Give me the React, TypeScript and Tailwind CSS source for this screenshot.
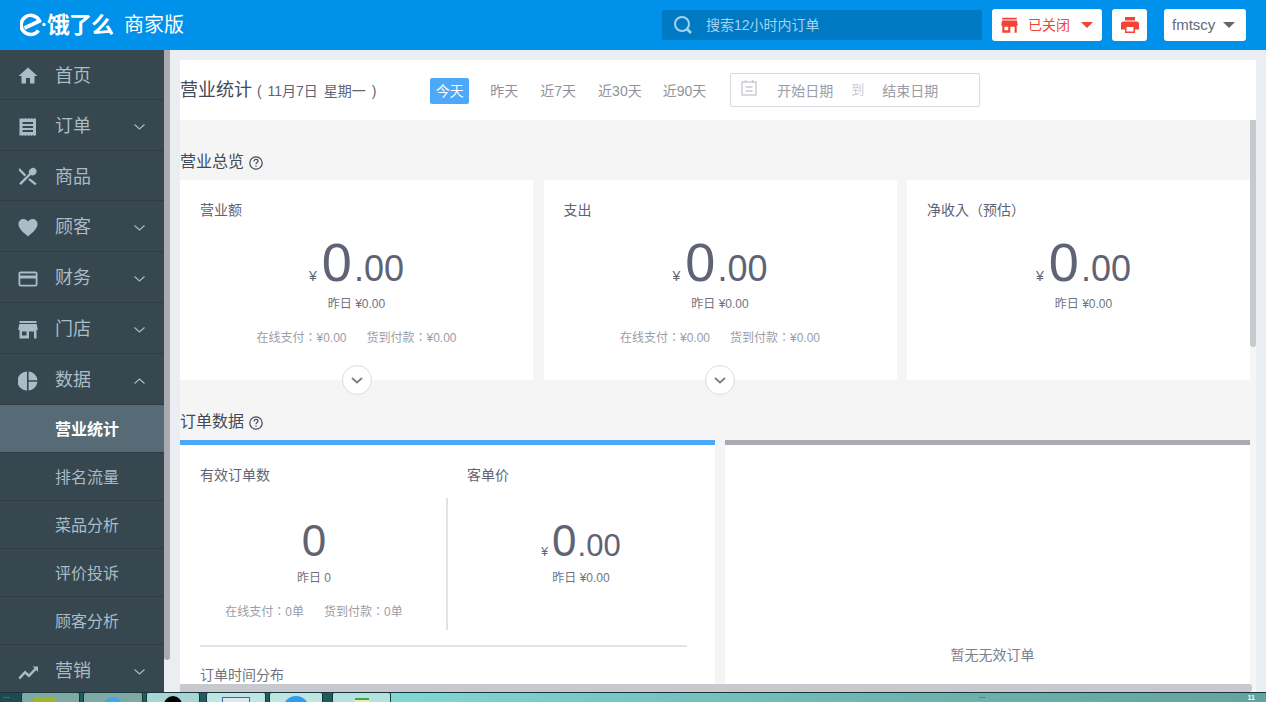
const cjk = "font-['Liberation_Sans','Noto_Sans_CJK_SC',sans-serif]"
const centered = "font-['Liberation_Sans','Noto_Sans_CJK_TC',sans-serif]"

function Chevron({ up }: { up?: boolean }) {
  return (
    <svg width="11" height="6" viewBox="0 0 11 6" className="ml-auto mr-[19px]" fill="none" stroke="#a9bcc7" strokeWidth="1.1">
      <path d={up ? 'M0.5 5.5 L5.5 1 L10.5 5.5' : 'M0.5 0.5 L5.5 5 L10.5 0.5'} />
    </svg>
  )
}

const icons: Record<string, React.ReactNode> = {
  home: <path d="M10 1.5 L0.5 10 H3.5 V17.5 H8 V12 H12 V17.5 H16.5 V10 H19.5 Z" />,
  order: <path fillRule="evenodd" d="M1.5 1 L3 2 L4.5 1 L6 2 L7.5 1 L9 2 L10.5 1 L12 2 L13.5 1 L15 2 L16.5 1 L18 2 V18 L16.5 19 L15 18 L13.5 19 L12 18 L10.5 19 L9 18 L7.5 19 L6 18 L4.5 19 L3 18 L1.5 19 Z M4.5 5 V7 H15 V5 Z M4.5 9 V11 H15 V9 Z M4.5 13 V15 H15 V13 Z" />,
  food: <path d="M1.5 1 L8.2 7.8 L6.6 9.4 L0.8 3.5 Z M16.8 1.2 C19 2.6 19.2 5.2 17.6 7 C16.2 8.4 14.2 8.8 12.8 8 L3 18 L1.2 16.3 L11 6.6 C10.4 5 11 3 12.4 2 C13.8 .9 15.4 .5 16.8 1.2 Z M11.8 11.2 L18.6 16.4 L17 18.2 L10.2 12.8 Z" />,
  heart: <path d="M10 18.5 C7 15.5 .5 11.5 .5 6 C.5 3 2.8 1 5.4 1 C7.2 1 9 2 10 3.6 C11 2 12.8 1 14.6 1 C17.2 1 19.5 3 19.5 6 C19.5 11.5 13 15.5 10 18.5 Z" />,
  card: <path fillRule="evenodd" d="M2.5 2.5 H17.5 Q19.5 2.5 19.5 4.5 V15.5 Q19.5 17.5 17.5 17.5 H2.5 Q.5 17.5 .5 15.5 V4.5 Q.5 2.5 2.5 2.5 Z M2.3 4.4 V6.6 H17.7 V4.4 Z M2.3 9.4 V15.7 H17.7 V9.4 Z" />,
  shop: <path fillRule="evenodd" d="M1.5 1 H18.5 V3 H1.5 Z M1.2 4 H18.8 L19.8 10 H18.5 V18.5 H16 V11.5 H11 V18.5 H1.5 V10 H.2 Z M4 11.5 V15.5 H8.5 V11.5 Z" />,
  pie: <path d="M9 .5 V19.5 A9.5 9.5 0 0 1 9 .5 Z M10.6 .6 A9.5 9.5 0 0 1 19.5 9.2 H10.6 Z M10.6 10.8 H19.5 A9.5 9.5 0 0 1 10.6 19.4 Z" />,
  trend: <path d="M.5 15.5 L7 8.5 L11 12 L16.5 6.2 L14.5 4.5 H20 V10 L18.2 8 L11 15.5 L7 12 L2 17.5 Z" />,
}

function NavItem({ icon, label, chevron, up, h }: { icon: string; label: string; chevron?: boolean; up?: boolean; h: string }) {
  return (
    <div className={`flex items-center ${h} pt-[3px] border-b border-[#2e3c45] text-[#a9bcc7]`}>
      <svg width="20" height="20" viewBox="0 0 20 20" fill="#a9bcc7" className="ml-[18px] shrink-0">
        {icons[icon]}
      </svg>
      <span className="ml-[17px] text-[18px]">{label}</span>
      {chevron && <Chevron up={up} />}
    </div>
  )
}

function SubItem({ label, active }: { label: string; active?: boolean }) {
  return (
    <div className={`flex items-center h-[48px] pt-[2px] pl-[55px] text-[16px] border-b border-[#2e3c45] ${active ? 'bg-[#566b76] text-white font-bold' : 'text-[#a9bcc7]'}`}>
      {label}
    </div>
  )
}

function Sidebar() {
  return (
    <aside className="relative w-[164px] shrink-0 bg-[#37474f] overflow-hidden">
      <NavItem icon="home" label="首页" h="h-[50px]" />
      <NavItem icon="order" label="订单" chevron h="h-[51px]" />
      <NavItem icon="food" label="商品" h="h-[50px]" />
      <NavItem icon="heart" label="顾客" chevron h="h-[51px]" />
      <NavItem icon="card" label="财务" chevron h="h-[51px]" />
      <NavItem icon="shop" label="门店" chevron h="h-[51px]" />
      <NavItem icon="pie" label="数据" chevron up h="h-[51px]" />
      <SubItem label="营业统计" active />
      <SubItem label="排名流量" />
      <SubItem label="菜品分析" />
      <SubItem label="评价投诉" />
      <SubItem label="顾客分析" />
      <NavItem icon="trend" label="营销" chevron h="h-[51px]" />
    </aside>
  )
}

function Money({ big, small, yen, bigText }: { big?: boolean; small?: string; yen?: boolean; bigText: string }) {
  return (
    <div className="flex items-baseline justify-center text-[#5f6373]">
      {yen && <span className={big ? 'text-[14px] mr-[5px]' : 'text-[12px] mr-[4px]'}>¥</span>}
      <span className={big ? 'text-[54px] leading-[54px]' : 'text-[44px] leading-[42px]'}>{bigText}</span>
      {small && <span className={big ? 'ml-[2px] text-[36px] leading-[54px]' : 'ml-[1px] text-[31px] leading-[42px]'}>{small}</span>}
    </div>
  )
}

function Help() {
  return (
    <svg width="14" height="14" viewBox="0 0 14 14" className="ml-[5px] mt-[2px]" fill="none" stroke="#404a58" strokeWidth="1.2">
      <circle cx="7" cy="7" r="6.2" />
      <path d="M5 5.4 C5 4 6 3.4 7 3.4 C8.2 3.4 9 4.2 9 5.2 C9 6.6 7 6.6 7 8.2" />
      <path d="M7 9.5 V10.8" />
    </svg>
  )
}

function ExpandButton() {
  return (
    <div className="absolute left-1/2 -translate-x-1/2 bottom-[-15px] w-[30px] h-[30px] rounded-full bg-white border border-[#dcdde0] flex items-center justify-center">
      <svg width="12" height="7" viewBox="0 0 12 7" fill="none" stroke="#7c808c" strokeWidth="2">
        <path d="M1 1 L6 5.5 L11 1" />
      </svg>
    </div>
  )
}

function StatCard({ title, extra, width, inset }: { title: string; extra?: boolean; width: string; inset?: string }) {
  return (
    <div className={`relative ${width} h-[200px] bg-white shrink-0 pt-[22px]`}>
      <div className={`pl-[20px] text-[14px] leading-[16px] text-[#5f6373] ${centered}`}>{title}</div>
      <div className={inset}>
        <div className="mt-[17px]">
          <Money big yen bigText="0" small=".00" />
        </div>
        <div className="text-center text-[12px] leading-[16px] text-[#6f7380]">昨日 ¥0.00</div>
      </div>
      {extra && (
        <>
          <div className={`mt-[18px] flex justify-center gap-[20px] text-[12px] leading-[16px] text-[#9a9da7] ${centered}`}>
            <span>在线支付：¥0.00</span>
            <span>货到付款：¥0.00</span>
          </div>
          <ExpandButton />
        </>
      )}
    </div>
  )
}

function SectionTitle({ label }: { label: string }) {
  return (
    <div className="flex items-center h-[20px] text-[16px] text-[#404a58]">
      {label}
      <Help />
    </div>
  )
}

function TaskButton({ width, tone, gap, children }: { width: string; tone: string; gap: string; children: React.ReactNode }) {
  return (
    <div className={`${width} ${tone} ${gap} h-full shrink-0 rounded-t-[2px] border-x border-[#17353a] flex justify-center overflow-hidden`}>
      {children}
    </div>
  )
}

function Taskbar() {
  return (
    <div className="h-[10px] shrink-0 bg-[#1e5c5e] border-t border-[#17353a] flex items-end relative">
      <div className="w-[21px] h-full bg-[#1e4a50] text-[#9fb8bb] text-[8px] leading-[6px] pl-[3px]">...</div>
      <TaskButton width="w-[59px]" tone="bg-[#7da8a4]" gap="ml-0">
        <div className="mt-[4px] -ml-[12px] w-[22px] h-[6px] bg-[#a2b32c]" />
      </TaskButton>
      <TaskButton width="w-[60px]" tone="bg-[#7da8a4]" gap="ml-[3px]">
        <div className="mt-[4px] w-[20px] h-[20px] rounded-full bg-[#42a5e8] shrink-0" />
      </TaskButton>
      <TaskButton width="w-[54px]" tone="bg-[#a8d6d3]" gap="ml-[3px]">
        <div className="mt-[3px] w-[18px] h-[18px] rounded-full bg-black shrink-0" />
      </TaskButton>
      <TaskButton width="w-[60px]" tone="bg-[#bde6e3]" gap="ml-[6px]">
        <div className="mt-[4px] w-[28px] h-[8px] bg-[#dfe8f2] border-t border-x border-[#3a63b8] shrink-0" />
      </TaskButton>
      <TaskButton width="w-[54px]" tone="bg-[#bde6e3]" gap="ml-[3px]">
        <div className="mt-[3px] w-[26px] h-[26px] rounded-full bg-[#2e9bf0] shrink-0" />
      </TaskButton>
      <TaskButton width="w-[59px]" tone="bg-[#b4e2df]" gap="ml-[9px]">
        <div className="mt-[5px] w-[14px] h-[6px] bg-[#f0e6b4] border-t-2 border-[#3aa655] shrink-0" />
      </TaskButton>
      <div className="flex-1 h-full bg-gradient-to-r from-[#80d8d3] via-[#6fb8b5] to-[#62a3a1] flex justify-end">
        <span className="text-[#17353a] text-[8px] leading-[6px] mr-[262px]">...</span>
        <span className="text-white text-[7px] leading-[9px] mr-[11px] font-bold">11</span>
      </div>
    </div>
  )
}

export default function App() {
  return (
    <div className={`w-[1266px] h-[702px] overflow-hidden flex flex-col bg-[#eaedf2] ${cjk}`}>
      <header className="h-[50px] shrink-0 bg-[#0091ea] flex items-center text-white">
        <div className="flex items-center ml-[20px] w-[165px]">
          <svg width="26" height="24" viewBox="0 0 26 24" fill="none" stroke="white" strokeWidth="3.6" className="shrink-0">
            <path d="M4.5 15 L19.5 8 A9.6 9.6 0 1 0 18.5 17.5" />
            <circle cx="24" cy="11.5" r="1.7" fill="white" stroke="none" />
          </svg>
          <span className="ml-[1px] text-[23px] leading-[30px] font-bold tracking-[-1px] shrink-0">饿了么</span>
          <span className="ml-[11px] text-[20px] shrink-0">商家版</span>
        </div>
        <div className="ml-[477px] w-[320px] h-[30px] bg-[#0079c3] rounded-[2px] flex items-center">
          <svg width="20" height="20" viewBox="0 0 20 20" fill="none" stroke="#a4d3ef" className="ml-[11px]">
            <circle cx="9" cy="9" r="7" strokeWidth="2" />
            <path d="M14 14 L18 18" strokeWidth="2.6" />
          </svg>
          <span className="ml-[13px] text-[14px] text-[#a4d3ef]">搜索12小时内订单</span>
        </div>
        <div className="ml-[10px] w-[110px] h-[32px] bg-white rounded-[3px] flex items-center">
          <svg width="17" height="17" viewBox="0 0 20 20" fill="#f44336" className="ml-[9px]">
            {icons.shop}
          </svg>
          <span className="ml-[10px] text-[14px] text-[#f44336]">已关闭</span>
          <span className="ml-[11px] w-0 h-0 border-x-[6px] border-x-transparent border-t-[6px] border-t-[#f44336]" />
        </div>
        <div className="ml-[10px] w-[35px] h-[32px] bg-white rounded-[3px] flex items-center justify-center">
          <svg width="18" height="18" viewBox="0 0 18 18" fill="#f44336">
            <path fillRule="evenodd" d="M4 1 H14 V4.5 H4 Z M2.5 5.5 H15.5 Q18 5.5 18 8 V13.5 H14 V17 H4 V13.5 H0 V8 Q0 5.5 2.5 5.5 Z M5.5 11 V15.5 H12.5 V11 Z" />
          </svg>
        </div>
        <div className="ml-[17px] w-[82px] h-[32px] bg-white rounded-[3px] flex items-center">
          <span className="ml-[8px] text-[15px] text-[#666a76]">fmtscy</span>
          <span className="ml-[8px] w-0 h-0 border-x-[6px] border-x-transparent border-t-[6px] border-t-[#666]" />
        </div>
      </header>

      <div className="flex flex-1 min-h-0">
        <Sidebar />
        <div className="w-[6px] shrink-0 bg-[#eaedf2]">
          <div className="h-[610px] bg-[#aaaab1] rounded-b-[3px]" />
        </div>

        <div className="relative ml-[10px] w-[1076px] mt-[10px] flex flex-col min-h-0">
          <div className="h-[60px] shrink-0 bg-white flex items-center pt-[2px]">
            <span className="-mt-[2px] text-[18px] text-[#404a58]">营业统计</span>
            <span className="ml-[5px] text-[14px] text-[#5f6373] [word-spacing:2px]">( 11月7日 星期一 )</span>
            <div className="ml-[54px] h-[26px] px-[5.5px] bg-[#4fa8f7] rounded-[2px] text-[14px] leading-[26px] text-white">今天</div>
            <div className="ml-[21px] text-[14px] text-[#8e919c]">昨天</div>
            <div className="ml-[22px] text-[14px] text-[#8e919c]">近7天</div>
            <div className="ml-[22px] text-[14px] text-[#8e919c]">近30天</div>
            <div className="ml-[21px] text-[14px] text-[#8e919c]">近90天</div>
            <div className="ml-[24px] -mt-[2px] w-[250px] h-[34px] border border-[#d9d9dd] rounded-[2px] flex items-center">
              <svg width="16" height="18" viewBox="0 0 16 18" fill="none" stroke="#c9cbd3" strokeWidth="1.4" className="ml-[10px] -mt-[5px]">
                <rect x="1" y="3" width="14" height="13" />
                <path d="M4.5 1 V4 M11.5 1 V4 M4.5 8 H11.5 M4.5 12 H11.5" />
              </svg>
              <span className="ml-[20px] pt-[2px] text-[14px] text-[#9a9da7]">开始日期</span>
              <span className="ml-[18px] -mt-[1px] text-[13px] text-[#c9cbd3]">到</span>
              <span className="ml-[18px] pt-[2px] text-[14px] text-[#9a9da7]">结束日期</span>
            </div>
          </div>

          <div className="relative flex-1 min-h-0 bg-[#f5f5f5] overflow-hidden">
            <div className="pt-[32px]">
              <SectionTitle label="营业总览" />
              <div className="mt-[8px] flex gap-[10.5px]">
                <StatCard title="营业额" extra width="w-[353px]" />
                <StatCard title="支出" extra width="w-[353px]" />
                <StatCard title="净收入（预估）" width="w-[343px]" inset="pl-[10px]" />
              </div>
              <div className="mt-[32px]">
                <SectionTitle label="订单数据" />
              </div>
              <div className="mt-[8px] flex gap-[10px]">
                <div className="w-[535px] h-[260px] bg-white border-t-[5px] border-[#4fa8f7] pl-[20px] pt-[22px] shrink-0">
                  <div className="flex text-[14px] leading-[16px] text-[#5f6373]">
                    <span className="w-[267px]">有效订单数</span>
                    <span>客单价</span>
                  </div>
                  <div className="mt-[15px] flex h-[132px]">
                    <div className="w-[248px] shrink-0 pt-[22px] pr-[18px] border-r-2 border-[#e3e3e6] text-center">
                      <Money bigText="0" />
                      <div className="mt-[8px] text-[12px] leading-[16px] text-[#6f7380]">昨日 0</div>
                      <div className={`mt-[18px] flex justify-center gap-[20px] text-[12px] leading-[16px] text-[#9a9da7] ${centered}`}>
                        <span>在线支付：0单</span>
                        <span>货到付款：0单</span>
                      </div>
                    </div>
                    <div className="w-[266px] shrink-0 pt-[22px] text-center">
                      <Money yen bigText="0" small=".00" />
                      <div className="mt-[3px] text-[12px] leading-[16px] text-[#6f7380]">昨日 ¥0.00</div>
                    </div>
                  </div>
                  <div className="mt-[15px] w-[487px] h-[2px] bg-[#e3e3e6]" />
                  <div className="mt-[20px] text-[14px] leading-[16px] text-[#6f7380]">订单时间分布</div>
                </div>
                <div className="w-[525px] h-[260px] bg-white border-t-[5px] border-[#a9aab3] flex justify-center shrink-0">
                  <span className="mt-[202px] ml-[10px] text-[14px] leading-[16px] text-[#7c808c]">暂无无效订单</span>
                </div>
              </div>
            </div>
            {/* vertical page scrollbar */}
            <div className="absolute right-0 top-0 w-[6px] h-[227px] bg-[#c8c9ce] rounded-b-[3px]" />
            {/* horizontal page scrollbar */}
            <div className="absolute left-0 bottom-0 w-[1072px] h-[8px] bg-[#c8c9ce] rounded-r-[3px]" />
          </div>
        </div>
      </div>

      <Taskbar />
    </div>
  )
}
